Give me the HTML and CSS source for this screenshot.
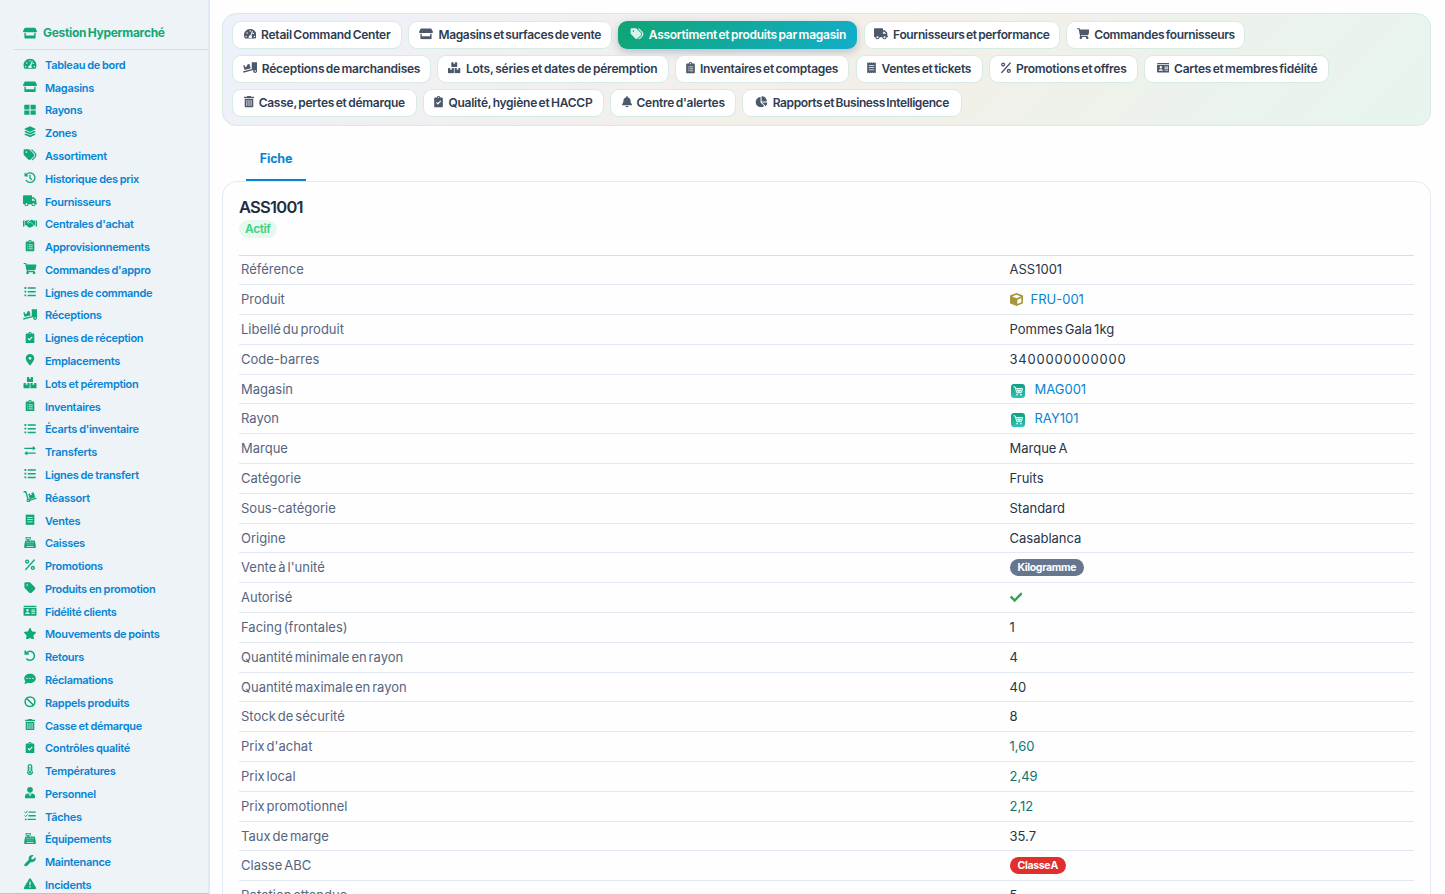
FILE: index.html
```html
<!DOCTYPE html>
<html lang="fr">
<head>
    <meta charset="UTF-8">
    <meta name="viewport" content="width=device-width, initial-scale=1.0">
    <title>Gestion Hypermarché - ASS1001</title>
    <link rel="stylesheet" href="styles.css">
</head>
<body>
    <svg class="sprite" aria-hidden="true">
        <symbol id="gauge" viewBox="0 0 576 512"><path fill-rule="evenodd" d="M288 32C129 32 0 161 0 320c0 53 14 102 39 145 6 10 16 15 28 15h442c12 0 22-5 28-15 25-43 39-92 39-145C576 161 447 32 288 32zm0 64a32 32 0 1 1 0 64 32 32 0 1 1 0-64zM96 352a32 32 0 1 1 0 64 32 32 0 1 1 0-64zm48-160a32 32 0 1 1 0 64 32 32 0 1 1 0-64zM391 136c13 4 19 17 15 30l-62 188c25 18 35 67 8 94H224c-27-40-7-126 74-128l62-169c4-13 18-19 31-15zM432 208a32 32 0 1 1 0 64 32 32 0 1 1 0-64zm48 144a32 32 0 1 1 0 64 32 32 0 1 1 0-64z"/></symbol>
        <symbol id="store" viewBox="0 0 640 512"><path fill-rule="evenodd" d="M110 16h420c22 0 41 13 50 33l56 113c8 22-6 62-40 62H44c-34 0-48-40-40-62L60 49c9-20 28-33 50-33zM64 256h64v112h384V256h64v208c0 26-22 48-48 48H112c-26 0-48-22-48-48V256z"/></symbol>
        <symbol id="grid" viewBox="0 0 512 512"><path d="M24 32h208v208H0V56c0-13 11-24 24-24zm256 0h208c13 0 24 11 24 24v184H280V32zM0 288h232v192H24c-13 0-24-11-24-24V288zm280 0h232v168c0 13-11 24-24 24H280V288z"/></symbol>
        <symbol id="layers" viewBox="0 0 512 512"><path d="M12 119 235 17c14-6 28-6 42 0l223 102c16 8 16 22 0 30L277 251c-14 6-28 6-42 0L12 149c-16-8-16-22 0-30zm0 122 58-27 152 70c22 10 46 10 68 0l152-70 58 27c16 8 16 22 0 30L277 373c-14 6-28 6-42 0L12 271c-16-8-16-22 0-30zm0 122 58-27 152 70c22 10 46 10 68 0l152-70 58 27c16 8 16 22 0 30L277 495c-14 6-28 6-42 0L12 393c-16-8-16-22 0-30z"/></symbol>
        <symbol id="tags" viewBox="0 20 512 460"><path d="M345 39.1L472.8 168.4c52.4 53 52.4 138.2 0 191.2L360.8 472.9c-9.3 9.4-24.5 9.5-33.9 .2s-9.5-24.5-.2-33.9L438.6 325.9c33.9-34.3 33.9-89.4 0-123.7L310.9 72.9c-9.3-9.4-9.2-24.6 .2-33.9s24.6-9.2 33.9 .2zM0 229.5V80C0 53.5 21.5 32 48 32H197.5c17 0 33.3 6.7 45.3 18.7l168 168c25 25 25 65.5 0 90.5L277.3 442.7c-25 25-65.5 25-90.5 0l-168-168C6.7 262.7 0 246.5 0 229.5zM144 144a32 32 0 1 0 -64 0 32 32 0 1 0 64 0z"/></symbol>
        <symbol id="tag" viewBox="0 20 448 460"><path d="M0 80V229.5c0 17 6.7 33.3 18.7 45.3l176 176c25 25 65.5 25 90.5 0L418.7 317.3c25-25 25-65.5 0-90.5l-176-176c-12-12-28.3-18.7-45.3-18.7H48C21.5 32 0 53.5 0 80zm112 32a32 32 0 1 1 0 64 32 32 0 1 1 0-64z"/></symbol>
        <symbol id="history" viewBox="0 0 512 512"><path class="line" d="M70 150a215 215 0 1 1 15 225M40 60v110h110M256 140v124l72 64"/></symbol>
        <symbol id="truck" viewBox="0 0 640 512"><path d="M48 0C21.5 0 0 21.5 0 48V368c0 26.5 21.5 48 48 48H64c0 53 43 96 96 96s96-43 96-96H384c0 53 43 96 96 96s96-43 96-96h32c17.7 0 32-14.3 32-32s-14.3-32-32-32V288 256 237.3c0-17-6.7-33.3-18.7-45.3L512 114.7c-12-12-28.3-18.7-45.3-18.7H416V48c0-26.5-21.5-48-48-48H48zM416 160h50.7L544 237.3V256H416V160zM112 416a48 48 0 1 1 96 0 48 48 0 1 1 -96 0zm368-48a48 48 0 1 1 0 96 48 48 0 1 1 0-96z"/></symbol>
        <symbol id="handshake" viewBox="0 0 640 512"><path d="M0 108h66v276H0zM574 108h66v276h-66zM92 118h62l70-32h70l-94 94c-18 44 40 84 76 56l60-44 150 126c26 26-8 66-34 46-4 32-40 42-58 26-20 42-54 44-78 24-20 30-56 20-66 4l-96-88H92V118zm254-20c44-30 88-28 122 10h80v222h-28L342 162l-76 62c-24 16-48-12-26-32z"/></symbol>
        <symbol id="clipboard" viewBox="0 0 384 512"><path fill-rule="evenodd" d="M48 64h66a80 80 0 0 1 156 0h66c26 0 48 22 48 48v352c0 26-22 48-48 48H48c-26 0-48-22-48-48V112c0-26 22-48 48-48zm144-16a28 28 0 1 0 0 56 28 28 0 1 0 0-56zM72 200v32h42v-32zm70 0v32h170v-32zM72 290v32h42v-32zm70 0v32h170v-32zM72 380v32h42v-32zm70 0v32h170v-32z"/></symbol>
        <symbol id="check-board" viewBox="0 0 384 512"><path fill-rule="evenodd" d="M48 64h66a80 80 0 0 1 156 0h66c26 0 48 22 48 48v352c0 26-22 48-48 48H48c-26 0-48-22-48-48V112c0-26 22-48 48-48zm144-24a24 24 0 1 0 0 48 24 24 0 1 0 0-48zM82 298l82 92 148-152-36-36-110 114-46-52z"/></symbol>
        <symbol id="cart" viewBox="0 0 576 512"><path d="M0 24C0 11 11 0 24 0h78c14 0 24 10 27 24l7 40h416c16 0 27 14 23 30l-48 204c-3 13-14 22-27 22H184l8 40h280c16 0 27 16 22 30a58 58 0 1 1-70 18H222a58 58 0 1 1-76-12L78 48H24C11 48 0 37 0 24z"/></symbol>
        <symbol id="list" viewBox="0 0 512 512"><path d="M10 50h80v78H10zM10 216h80v78H10zM10 382h80v78H10zM155 58h357v62H155zM155 224h357v62H155zM155 390h357v62H155z"/></symbol>
        <symbol id="loading" viewBox="0 0 640 512"><path fill-rule="evenodd" d="M400 0h240v400a88 88 0 1 1-164-36L22 482 4 420l416-112c-12 0-20-9-20-20V0zm160 366a36 36 0 1 0 0 72 36 36 0 1 0 0-72zM12 158l70-20 26 92 58-36 34-86 70-20c16-4 26 2 30 18l44 152c4 16-2 26-18 30L94 350c-16 4-26-2-30-18L12 158z"/></symbol>
        <symbol id="pin" viewBox="0 0 384 512"><path d="M215.7 499.2C267 435 384 279.4 384 192C384 86 298 0 192 0S0 86 0 192c0 87.4 117 243 168.3 307.2c12.3 15.3 35.1 15.3 47.4 0zM192 128a64 64 0 1 1 0 128 64 64 0 1 1 0-128z"/></symbol>
        <symbol id="boxes" viewBox="0 0 576 512"><path d="M176 0h76v86l36-22 36 22V0h76c14 0 24 10 24 24v176c0 14-10 24-24 24H176c-14 0-24-10-24-24V24c0-14 10-24 24-24zM24 272h76v86l36-22 36 22v-86h76c14 0 24 10 24 24v192c0 14-10 24-24 24H24c-14 0-24-10-24-24V296c0-14 10-24 24-24zm304 0h76v86l36-22 36 22v-86h76c14 0 24 10 24 24v192c0 14-10 24-24 24H328c-14 0-24-10-24-24V296c0-14 10-24 24-24z"/></symbol>
        <symbol id="swap" viewBox="0 0 512 512"><path class="line" d="M25 150h370M110 362h375"/><path d="M380 50v200l132-100zM132 262v200L0 362z"/></symbol>
        <symbol id="dolly" viewBox="0 0 576 512"><path class="line" d="M24 34h82l92 350M252 420l300-90"/><path fill-rule="evenodd" d="M218 340a84 84 0 1 1 0 168 84 84 0 1 1 0-168zm0 48a36 36 0 1 0 0 72 36 36 0 1 0 0-72zM208 134l72-24 28 82 62-20-28-82 86-28c14-5 24 0 28 14l62 190c5 14 0 24-14 28l-206 66c-14 5-24 0-28-14z"/></symbol>
        <symbol id="receipt" viewBox="0 0 384 512"><path fill-rule="evenodd" d="M0 8l48 34L96 8l48 34 48-34 48 34 48-34 48 34 48-34v496l-48-34-48 34-48-34-48 34-48-34-48 34-48-34-48 34zM72 132v36h240v-36zm0 100v36h240v-36zm0 100v36h240v-36z"/></symbol>
        <symbol id="register" viewBox="0 0 512 512"><path fill-rule="evenodd" d="M60 0h230v116h-82v44h238c16 0 28 10 32 26l34 190v136H0V376l34-190c4-16 16-26 32-26h72v-44H60zm42 38v40h146V38zM96 214v38h38v-38zm90 0v38h38v-38zm90 0v38h38v-38zm90 0v38h38v-38zM140 298v38h38v-38zm92 0v38h38v-38zm92 0v38h38v-38zM96 410v38h320v-38z"/></symbol>
        <symbol id="percent" viewBox="0 0 448 512"><path class="line" d="M415 42 33 470"/><circle class="line" cx="96" cy="112" r="66"/><circle class="line" cx="352" cy="400" r="66"/></symbol>
        <symbol id="card" viewBox="0 0 576 512"><path fill-rule="evenodd" d="M40 32h496c22 0 40 18 40 40v24H0V72c0-22 18-40 40-40zM0 128h576v312c0 22-18 40-40 40H40c-22 0-40-18-40-40zm176 48a56 56 0 1 0 0 112 56 56 0 1 0 0-112zM80 400h192c0-44-26-80-64-80h-64c-38 0-64 36-64 80zm268-196v38h160v-38zm0 72v38h160v-38zm0 72v38h160v-38z"/></symbol>
        <symbol id="star" viewBox="0 0 576 512"><path d="M316.9 18C311.6 7 300.4 0 288.1 0s-23.4 7-28.8 18L195 150.3 51.4 171.5c-12 1.8-22 10.2-25.7 21.7s-.7 24.2 7.9 32.7L137.8 329 113.2 474.7c-2 12 3 24.2 12.9 31.3s23 8 33.8 2.3l128.3-68.5 128.3 68.5c10.8 5.7 23.9 4.9 33.8-2.3s14.9-19.3 12.9-31.3L438.5 329 542.7 225.9c8.6-8.5 11.7-21.2 7.9-32.7s-13.7-19.9-25.7-21.7L381.2 150.3 316.9 18z"/></symbol>
        <symbol id="undo" viewBox="0 0 512 512"><path class="line bold" d="M80 160a200 200 0 1 1 30 240M42 40v140h140"/></symbol>
        <symbol id="comment" viewBox="0 0 512 512"><path fill-rule="evenodd" d="M256 32c141 0 256 93 256 208S397 448 256 448c-38 0-74-7-106-19-32 24-80 51-140 51-10 0-13-10-7-18 26-28 44-58 48-92C19 335 0 290 0 240 0 125 115 32 256 32zM128 208a32 32 0 1 0 0 64 32 32 0 1 0 0-64zm128 0a32 32 0 1 0 0 64 32 32 0 1 0 0-64zm128 0a32 32 0 1 0 0 64 32 32 0 1 0 0-64z"/></symbol>
        <symbol id="ban" viewBox="0 0 512 512"><circle class="line bold" cx="256" cy="256" r="216"/><path class="line bold" d="M108 108l296 296"/></symbol>
        <symbol id="trash" viewBox="0 0 448 512"><path fill-rule="evenodd" d="M0 32h130l16-32h156l16 32h130v56H0zM32 120h384v344c0 26-22 48-48 48H80c-26 0-48-22-48-48zm80 56v270h34V176zm94 0v270h34V176zm94 0v270h34V176z"/></symbol>
        <symbol id="thermo" viewBox="0 0 256 512"><path fill-rule="evenodd" d="M128 0c58 0 104 46 104 104v180a128 128 0 1 1-208 0V104C24 46 70 0 128 0zm0 56c-26 0-48 22-48 48v198a76 76 0 1 0 96 0V104c0-26-22-48-48-48z"/><path d="M108 120h40v200a50 50 0 1 1-40 0z"/></symbol>
        <symbol id="person" viewBox="0 0 448 512"><circle cx="224" cy="126" r="126"/><path fill-rule="evenodd" d="M134 284h24l36 144 20-88-24-56h68l-24 56 20 88 36-144h24c76 0 134 58 134 134v46c0 26-22 48-48 48H48c-26 0-48-22-48-48v-46c0-76 58-134 134-134z"/></symbol>
        <symbol id="tasks" viewBox="0 0 512 512"><path class="line thin" d="M20 96l42 42 76-90M20 256l42 42 76-90"/><path d="M190 66h322v58H190zM190 228h322v58H190zM150 390h362v58H150z"/><circle cx="66" cy="418" r="40"/></symbol>
        <symbol id="wrench" viewBox="0 0 512 512"><path d="M352 320c88.4 0 160-71.6 160-160c0-15.3-2.2-30.1-6.2-44.2c-3.1-10.8-16.4-13.2-24.3-5.3l-76.8 76.8c-3 3-7.1 4.7-11.3 4.7H336c-8.8 0-16-7.2-16-16V118.6c0-4.2 1.7-8.3 4.7-11.3l76.8-76.8c7.9-7.9 5.4-21.2-5.3-24.3C382.1 2.2 367.3 0 352 0C263.6 0 192 71.6 192 160c0 19.1 3.4 37.5 9.5 54.5L19.9 396.1C7.2 408.8 0 426.1 0 444.1C0 481.6 30.4 512 67.9 512c18 0 35.3-7.2 48-19.9L297.5 310.5c17 6.2 35.4 9.5 54.5 9.5z"/></symbol>
        <symbol id="warning" viewBox="0 20 512 472"><path d="M256 32c14.2 0 27.3 7.5 34.5 19.8l216 368c7.3 12.4 7.3 27.7 .2 40.1S486.3 480 472 480H40c-14.3 0-27.6-7.7-34.7-20.1s-7-27.8 .2-40.1l216-368C228.7 39.5 241.8 32 256 32zm0 128c-13.3 0-24 10.7-24 24V296c0 13.3 10.7 24 24 24s24-10.7 24-24V184c0-13.3-10.7-24-24-24zm32 224a32 32 0 1 0 -64 0 32 32 0 1 0 64 0z"/></symbol>
        <symbol id="bell" viewBox="0 0 448 512"><path d="M224 0c-17.7 0-32 14.3-32 32V51.2C119 66 64 130.6 64 208v18.8c0 47-17.3 92.4-48.5 127.6l-7.4 8.3c-8.4 9.4-10.4 22.9-5.3 34.4S19.4 416 32 416H416c12.6 0 24-7.4 29.2-18.9s3.1-25-5.3-34.4l-7.4-8.3C401.3 319.2 384 273.9 384 226.8V208c0-77.4-55-142-128-156.8V32c0-17.7-14.3-32-32-32zm45.3 493.3c12-12 18.7-28.3 18.7-45.3H224 160c0 17 6.7 33.3 18.7 45.3s28.3 18.7 45.3 18.7s33.3-6.7 45.3-18.7z"/></symbol>
        <symbol id="pie" viewBox="0 0 576 512"><path d="M304 240V16.6c0-9 7-16.6 16-16.6C443.7 0 544 100.3 544 224c0 9-7.6 16-16.6 16H304zM32 272C32 150.7 122.1 50.3 239 34.3c9.2-1.3 17 6.1 17 15.4V288L412.5 444.5c6.7 6.7 6.2 17.7-1.5 23.1C371.8 495.6 323.8 512 272 512C139.5 512 32 404.6 32 272zm526.4 16c9.3 0 16.6 7.8 15.4 17c-7.7 55.9-34.6 105.6-73.9 142.3c-6 5.6-15.4 5.2-21.2-.7L320 288H558.4z"/></symbol>
        <symbol id="check" viewBox="0 0 512 512"><path d="M174 439 8 273c-10-10-10-26 0-36l36-36c10-10 26-10 36 0l112 112L432 73c10-10 26-10 36 0l36 36c10 10 10 26 0 36L210 439c-10 10-26 10-36 0z"/></symbol>
        <symbol id="cube" viewBox="0 0 512 512"><path fill-rule="evenodd" d="M256 0 496 92c10 4 16 12 16 24v270c0 12-6 20-16 24L256 512 16 410c-10-4-16-12-16-24V116c0-12 6-20 16-24zm0 68L82 134l174 72 174-72zm32 364 160-72V196l-160 68z"/></symbol>
        <symbol id="cart-outline" viewBox="0 0 24 24"><path fill="none" stroke="currentColor" stroke-width="2.4" d="M1 2h4l4 14h11l3-10H6M8 11h13M12 6l1 10M17 6l-1 10"/><circle cx="10" cy="20.5" r="2.2"/><circle cx="19" cy="20.5" r="2.2"/></symbol>
    </svg>

    <div class="app">
        <aside class="sidebar">
            <div class="brand"><svg class="brand-icon"><use href="#store"/></svg>Gestion Hypermarché</div>
            <nav id="menu"></nav>
        </aside>
        <main class="content">
            <nav class="modules" id="modules"></nav>
            <div class="tabs"><a class="tab">Fiche</a></div>
            <section class="sheet">
                <h1>ASS1001</h1>
                <span class="status">Actif</span>
                <dl class="fields" id="fields"></dl>
            </section>
        </main>
    </div>

    <script>
        const menu = [
            ["gauge", "Tableau de bord"], ["store", "Magasins"], ["grid", "Rayons"], ["layers", "Zones"],
            ["tags", "Assortiment"], ["history", "Historique des prix"], ["truck", "Fournisseurs"],
            ["handshake", "Centrales d'achat"], ["clipboard", "Approvisionnements"], ["cart", "Commandes d'appro"],
            ["list", "Lignes de commande"], ["loading", "Réceptions"], ["check-board", "Lignes de réception"],
            ["pin", "Emplacements"], ["boxes", "Lots et péremption"], ["clipboard", "Inventaires"],
            ["list", "Écarts d'inventaire"], ["swap", "Transferts"], ["list", "Lignes de transfert"],
            ["dolly", "Réassort"], ["receipt", "Ventes"], ["register", "Caisses"], ["percent", "Promotions"],
            ["tag", "Produits en promotion"], ["card", "Fidélité clients"], ["star", "Mouvements de points"],
            ["undo", "Retours"], ["comment", "Réclamations"], ["ban", "Rappels produits"],
            ["trash", "Casse et démarque"], ["check-board", "Contrôles qualité"], ["thermo", "Températures"],
            ["person", "Personnel"], ["tasks", "Tâches"], ["register", "Équipements"],
            ["wrench", "Maintenance"], ["warning", "Incidents"]
        ];

        const modules = [
            ["gauge", "Retail Command Center"], ["store", "Magasins et surfaces de vente"],
            ["tags", "Assortiment et produits par magasin"], ["truck", "Fournisseurs et performance"],
            ["cart", "Commandes fournisseurs"], ["loading", "Réceptions de marchandises"],
            ["boxes", "Lots, séries et dates de péremption"], ["clipboard", "Inventaires et comptages"],
            ["receipt", "Ventes et tickets"], ["percent", "Promotions et offres"],
            ["card", "Cartes et membres fidélité"], ["trash", "Casse, pertes et démarque"],
            ["check-board", "Qualité, hygiène et HACCP"], ["bell", "Centre d'alertes"],
            ["pie", "Rapports et Business Intelligence"]
        ];

        const cart = '<span class="cart-badge"><svg><use href="#cart-outline"/></svg></span>';
        const fields = [
            ["Référence", "ASS1001"],
            ["Produit", '<svg class="cube"><use href="#cube"/></svg><a>FRU-001</a>'],
            ["Libellé du produit", "Pommes Gala 1kg"],
            ["Code-barres", '<span class="barcode">3400000000000</span>'],
            ["Magasin", cart + "<a>MAG001</a>"],
            ["Rayon", cart + "<a>RAY101</a>"],
            ["Marque", "Marque A"],
            ["Catégorie", "Fruits"],
            ["Sous-catégorie", "Standard"],
            ["Origine", "Casablanca"],
            ["Vente à l'unité", '<span class="badge slate">Kilogramme</span>'],
            ["Autorisé", '<svg class="check"><use href="#check"/></svg>'],
            ["Facing (frontales)", "1"],
            ["Quantité minimale en rayon", "4"],
            ["Quantité maximale en rayon", "40"],
            ["Stock de sécurité", "8"],
            ["Prix d'achat", '<span class="price">1,60</span>'],
            ["Prix local", '<span class="price">2,49</span>'],
            ["Prix promotionnel", '<span class="price">2,12</span>'],
            ["Taux de marge", "35.7"],
            ["Classe ABC", '<span class="badge red">Classe A</span>'],
            ["Rotation attendue", "5"]
        ];

        document.getElementById("menu").innerHTML = menu.map(([icon, label]) =>
            `<a class="menu-item"><svg class="menu-icon"><use href="#${icon}"/></svg><span>${label}</span></a>`).join("");

        document.getElementById("modules").innerHTML = modules.map(([icon, label]) =>
            `<a class="module ${icon}"><svg class="module-icon"><use href="#${icon}"/></svg><span>${label}</span></a>`).join("");
        document.querySelector(".module.tags").classList.add("active");

        document.getElementById("fields").innerHTML = fields.map(([label, value]) =>
            `<div class="field"><dt>${label}</dt><dd>${value}</dd></div>`).join("");
    </script>
</body>
</html>
```
FILE: styles.css
```css
* {
    box-sizing: border-box;
}

body {
    margin: 0;
    height: 894px;
    overflow: hidden;
    background: #fefefe;
    color: #273449;
    font-family: Inter, "Liberation Sans", sans-serif;
}

svg {
    fill: currentColor;
    flex: none;
}

.sprite {
    display: none;
}

.line {
    fill: none;
    stroke: currentColor;
    stroke-width: 58;
    stroke-linecap: round;
    stroke-linejoin: round;
}

.line.bold {
    stroke-width: 68;
}

.line.thin {
    stroke-width: 44;
}

.app {
    display: flex;
    height: 894px;
}

/* sidebar */
.sidebar {
    width: 210px;
    flex: none;
    padding: 16px 0 0 13px;
    background: #eef3f8;
    border-right: 2px solid #e0e9f2;
    border-bottom: 1px solid #bcc5cf;
    overflow: hidden;
}

.brand {
    display: flex;
    align-items: center;
    gap: 6px;
    height: 34px;
    padding-left: 10px;
    border-bottom: 1px solid #d5dfec;
    color: #10a874;
    font-size: 12px;
    font-weight: 700;
    letter-spacing: -0.3px;
    word-spacing: -1px;
}

.brand-icon {
    width: 14px;
    height: 12px;
}

#menu {
    padding-top: 3.5px;
}

.menu-item {
    display: flex;
    align-items: center;
    gap: 8px;
    height: 22.79px;
    padding-left: 10px;
    color: #0684d3;
    font-size: 11px;
    font-weight: 600;
    letter-spacing: -0.3px;
    word-spacing: -0.4px;
}

.menu-icon {
    width: 14px;
    height: 11.5px;
    margin-top: -2px;
    color: #10a874;
}

/* modules bar */
.content {
    flex: 1;
    min-width: 0;
    padding: 12.5px 14.5px 0 12px;
}

.modules {
    display: flex;
    flex-wrap: wrap;
    align-content: flex-start;
    gap: 6px 6.2px;
    height: 113px;
    padding: 7px 9px;
    border: 1px solid #d7ebe3;
    border-radius: 14px;
    background: linear-gradient(135deg, #edf1fb 0%, #f4efe8 50%, #e6f5ee 100%);
}

.module {
    display: flex;
    align-items: center;
    justify-content: center;
    gap: 5px;
    height: 28px;
    padding-bottom: 1px;
    border: 1px solid #d5ebe3;
    border-radius: 9px;
    background: #fff;
    color: #2e3c52;
    font-size: 12px;
    font-weight: 600;
    letter-spacing: -0.25px;
    word-spacing: -1.2px;
    white-space: nowrap;
}

.module.active {
    border-color: transparent;
    background: linear-gradient(135deg, #0fa574, #13aecb) border-box;
    box-shadow: 0 3px 8px rgba(50, 80, 130, 0.3);
    color: #fff;
}

.module-icon {
    width: 12.5px;
    height: 11.5px;
    opacity: 0.85;
}

.module.gauge { width: 170px; }
.module.store { width: 204px; letter-spacing: -0.35px; }
.module.tags { width: 239px; }
.module.truck { width: 196.5px; letter-spacing: -0.35px; }
.module.cart { width: 179px; letter-spacing: -0.35px; }
.module.loading { width: 199px; }
.module.boxes { width: 231.5px; letter-spacing: -0.2px; word-spacing: -1px; }
.module.clipboard { width: 174.5px; }
.module.receipt { width: 127.5px; }
.module.percent { width: 149px; }
.module.card { width: 185px; }
.module.trash { width: 184.5px; }
.module.check-board { width: 181.5px; }
.module.bell { width: 125.5px; }
.module.pie { width: 220px; letter-spacing: -0.4px; }

.store .module-icon,
.truck .module-icon,
.loading .module-icon,
.tags .module-icon {
    width: 14px;
}

.clipboard .module-icon,
.receipt .module-icon,
.check-board .module-icon {
    width: 9px;
}

.trash .module-icon,
.bell .module-icon,
.percent .module-icon {
    width: 10px;
}

/* record sheet */
.tabs {
    display: flex;
    height: 55px;
    padding: 10px 0 0 24px;
}

.tab {
    width: 60px;
    height: 45px;
    padding-top: 15px;
    border-bottom: 2px solid #0684d3;
    color: #0684d3;
    font-size: 12.5px;
    font-weight: 700;
    line-height: 15px;
    letter-spacing: -0.2px;
    text-align: center;
}

.sheet {
    height: 800px;
    padding: 16px 16px 0;
    border: 1px solid #e3e9f2;
    border-radius: 15px;
    display: flex;
    flex-direction: column;
    align-items: flex-start;
}

h1 {
    margin: 0;
    font-size: 16.5px;
    font-weight: 600;
    line-height: 18px;
    letter-spacing: -0.75px;
    color: #202d42;
}

.status {
    height: 18px;
    margin: 4px 0 17px;
    padding: 0 6px;
    border-radius: 9px;
    background: #e6f8ef;
    color: #3fce80;
    font-size: 12px;
    font-weight: 600;
    line-height: 18px;
    letter-spacing: -0.4px;
}

.fields {
    width: 100%;
    margin: 0;
}

.field {
    display: grid;
    grid-template-columns: 768.5px 1fr;
    align-items: center;
    height: 29.81px;
    padding: 0 2px 1px;
    font-size: 13px;
    word-spacing: -1.7px;
    border-top: 1px solid #e2e8f1;
}

.field:first-child {
    border-top-color: #d6deea;
}

dt {
    color: #56657e;
}

dd {
    display: flex;
    align-items: center;
    margin: 0;
}

dd a {
    color: #0684d3;
}

.barcode {
    letter-spacing: 0.8px;
}

.price {
    color: #0f746e;
}

.cube {
    width: 13px;
    height: 13px;
    margin-right: 8px;
    color: #a8963c;
}

.check {
    width: 12.5px;
    height: 12.5px;
    color: #30a653;
}

.cart-badge {
    display: flex;
    align-items: center;
    justify-content: center;
    width: 14px;
    height: 14px;
    margin: 4px 10px 0 1px;
    border-radius: 3px;
    background: linear-gradient(#109e83, #2cc3b2);
    color: #e4fffa;
}

.cart-badge svg {
    width: 10px;
    height: 10px;
}

.badge {
    height: 17px;
    margin-top: 1px;
    padding: 0 8px;
    border-radius: 9px;
    color: #fff;
    font-size: 10.5px;
    font-weight: 700;
    line-height: 18px;
    letter-spacing: -0.35px;
}

.slate {
    background: #66768f;
}

.red {
    background: #e02f2f;
}
```
